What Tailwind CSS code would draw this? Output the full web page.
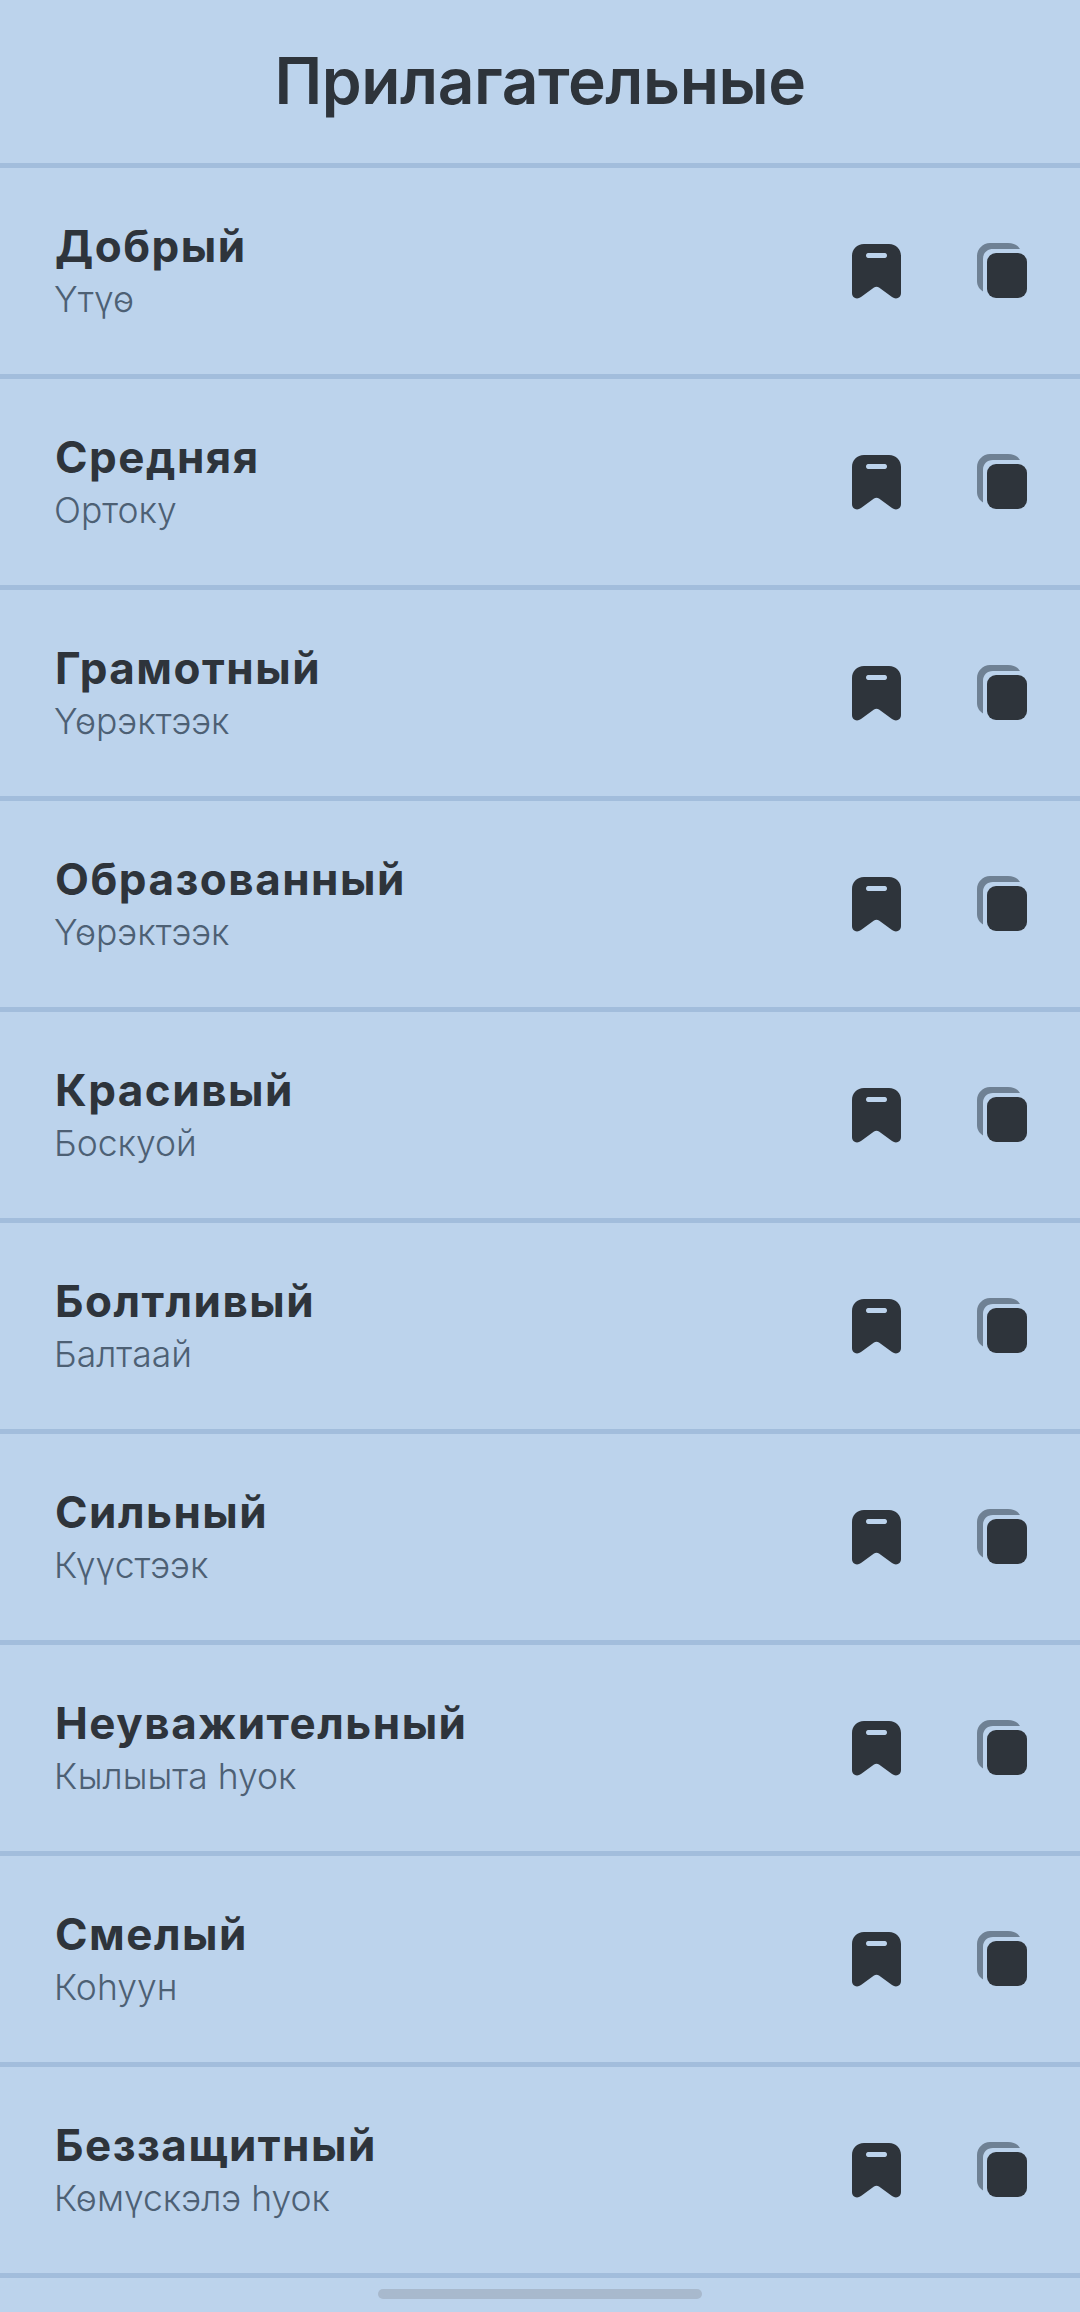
<!DOCTYPE html>
<html>
  <head>
    <meta charset="UTF-8" />
    <meta name="viewport" content="width=device-width, initial-scale=1.0" />
    <script src="https://cdn.jsdelivr.net/npm/@tailwindcss/browser@4"></script>
  </head>
  <body class="bg-[#bcd3ec] font-['Inter',sans-serif]">
    <div class="h-[2312px] w-[1080px] relative overflow-hidden">
      <div class="h-[168px] border-b-[5px] border-[#a2bddc] flex items-center justify-center">
        <h1 class="text-[64px] leading-none font-semibold text-[#2e343b] tracking-[-0.4px] pb-[1px]">Прилагательные</h1>
      </div>
      <div id="list"></div>
      <div class="absolute left-[378px] top-[2289px] w-[324px] h-[10px] rounded-full bg-[#a8b9cd]"></div>
    </div>
    <script>
      const words = [
        ["Добрый", "Үтүө"],
        ["Средняя", "Ортоку"],
        ["Грамотный", "Үөрэктээк"],
        ["Образованный", "Үөрэктээк"],
        ["Красивый", "Боскуой"],
        ["Болтливый", "Балтаай"],
        ["Сильный", "Күүстээк"],
        ["Неуважительный", "Кылыыта һуок"],
        ["Смелый", "Коһуун"],
        ["Беззащитный", "Көмүскэлэ һуок"],
      ];

      const listElem = document.getElementById("list");
      listElem.innerHTML = words
        .map(
          ([name, sub]) => `
        <div class="h-[211px] border-b-[5px] border-[#a2bddc] flex items-center pl-[55px] pr-[53px] pb-[1px]">
          <div class="flex-1 mt-[3px]">
            <div class="text-[44px] leading-[50px] font-bold text-[#2e343b] tracking-[1.5px]">${name}</div>
            <div class="text-[35.500px] leading-[47px] mt-[5px] -ml-[1px] font-light text-[#4d6074]">${sub}</div>
          </div>
          <svg class="w-[49px] h-[55px] mr-[76px] mt-[2px]" viewBox="0 0 49 55">
            <path fill="#2e343b" fill-rule="evenodd" d="M12 0H37C44 0 49 5 49 12V49C49 54 44 56 40 53L27 43.500C25.500 42.500 23.500 42.500 22 43.500L9 53C5 56 0 54 0 49V12C0 5 5 0 12 0ZM16 9C15 9 14 10 14 11.500C14 13 15 14 16 14H33C34 14 35 13 35 11.500C35 10 34 9 33 9Z" />
          </svg>
          <svg class="w-[50px] h-[55px]" viewBox="0 0 50 55">
            <path fill="#6f8194" d="M13 0H31C37 0 41 2.500 43 6H16C10 6 6 10 6 16V48.500C2.500 46 0 43 0 38V13C0 6 6 0 13 0Z" />
            <rect x="10" y="10" width="40" height="45" rx="9" fill="#2e343b" />
          </svg>
        </div>`
        )
        .join("");
    </script>
  </body>
</html>
